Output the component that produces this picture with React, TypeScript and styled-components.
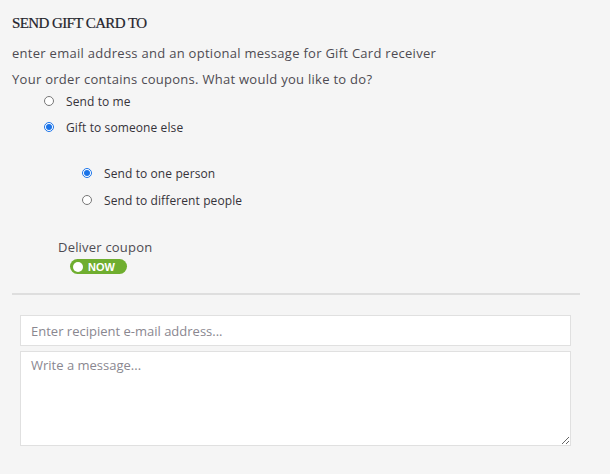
import React from "react";
import styled, { createGlobalStyle } from "styled-components";

const Global = createGlobalStyle`
  html, body { margin: 0; padding: 0; background: #f5f5f5; }
  body { font-family: "Open Sans", "Liberation Sans", sans-serif; }
`;

const Page = styled.div`
  width: 610px;
  height: 474px;
  box-sizing: border-box;
  padding: 13px 0 0 12px;
  background: #f5f5f5;
  overflow: hidden;
`;

const Heading = styled.h2`
  margin: 0;
  font-family: "Liberation Serif", "DejaVu Serif", serif;
  font-weight: 400;
  font-size: 15px;
  line-height: 20px;
  letter-spacing: -0.6px;
  color: #24242c;
  -webkit-text-stroke: 0.2px #24242c;
`;

const Text = styled.p<{ $mt: number }>`
  margin: ${(p) => p.$mt}px 0 0;
  font-size: 13px;
  line-height: 20px;
  color: #4e4b52;
  letter-spacing: 0.28px;
`;

const RadioList = styled.div<{ $indent: number; $mt: number; $gap: number }>`
  display: flex;
  flex-direction: column;
  gap: ${(p) => p.$gap}px;
  margin: ${(p) => p.$mt}px 0 0 ${(p) => p.$indent}px;
`;

const RadioRow = styled.label`
  display: flex;
  align-items: center;
  height: 20px;
  font-size: 12px;
  font-weight: 500;
  color: #35333a;
  letter-spacing: 0.1px;
`;

const Radio = styled.input`
  width: 10px;
  height: 10px;
  margin: 0 12px 0 0;
  accent-color: #1a73e8;
`;

const DeliverLabel = styled.div`
  margin: 27px 0 0 46px;
  font-size: 13px;
  line-height: 20px;
  color: #4e4b52;
  letter-spacing: 0.2px;
`;

const Toggle = styled.div`
  display: inline-flex;
  align-items: center;
  gap: 5px;
  margin: 2px 0 0 58px;
  width: 57px;
  height: 15px;
  box-sizing: border-box;
  padding: 0 3px;
  border-radius: 8px;
  background: #6fae2f;
  color: #fff;
  font-family: "Liberation Sans", Arial, sans-serif;
  font-weight: 700;
  font-size: 11px;
`;

const Knob = styled.span`
  width: 10px;
  height: 10px;
  border-radius: 50%;
  background: #fff;
`;

const ToggleWrap = styled.div`
  display: flex;
`;

const Divider = styled.hr`
  margin: 19px 0 0;
  width: 568px;
  border: none;
  border-top: 2px solid #dedede;
`;

const Fields = styled.div`
  display: flex;
  flex-direction: column;
  gap: 5px;
  margin: 20px 0 0 8px;
  width: 551px;
`;

const Input = styled.input`
  box-sizing: border-box;
  width: 100%;
  height: 31px;
  border: 1px solid #e0e0e0;
  background: #fff;
  padding: 0 10px;
  font-family: inherit;
  font-size: 13px;
  color: #333;
  outline: none;
  &::placeholder { color: #8a8790; }
`;

const TextArea = styled.textarea`
  box-sizing: border-box;
  width: 100%;
  height: 95px;
  border: 1px solid #e0e0e0;
  background: #fff;
  padding: 4px 10px;
  font-family: inherit;
  font-size: 13px;
  color: #333;
  outline: none;
  resize: vertical;
  &::placeholder { color: #8a8790; }
`;

export default function App() {
  return (
    <Page>
      <Global />
      <Heading>SEND GIFT CARD TO</Heading>
      <Text $mt={10}>enter email address and an optional message for Gift Card receiver</Text>
      <Text $mt={6}>Your order contains coupons. What would you like to do?</Text>
      <RadioList $indent={32} $mt={2} $gap={6}>
        <RadioRow>
          <Radio type="radio" name="who" />
          Send to me
        </RadioRow>
        <RadioRow>
          <Radio type="radio" name="who" defaultChecked />
          Gift to someone else
        </RadioRow>
      </RadioList>
      <RadioList $indent={70} $mt={26} $gap={7}>
        <RadioRow>
          <Radio type="radio" name="count" defaultChecked />
          Send to one person
        </RadioRow>
        <RadioRow>
          <Radio type="radio" name="count" />
          Send to different people
        </RadioRow>
      </RadioList>
      <DeliverLabel>Deliver coupon</DeliverLabel>
      <ToggleWrap>
        <Toggle>
          <Knob />
          NOW
        </Toggle>
      </ToggleWrap>
      <Divider />
      <Fields>
        <Input placeholder="Enter recipient e-mail address..." />
        <TextArea placeholder="Write a message..." />
      </Fields>
    </Page>
  );
}
